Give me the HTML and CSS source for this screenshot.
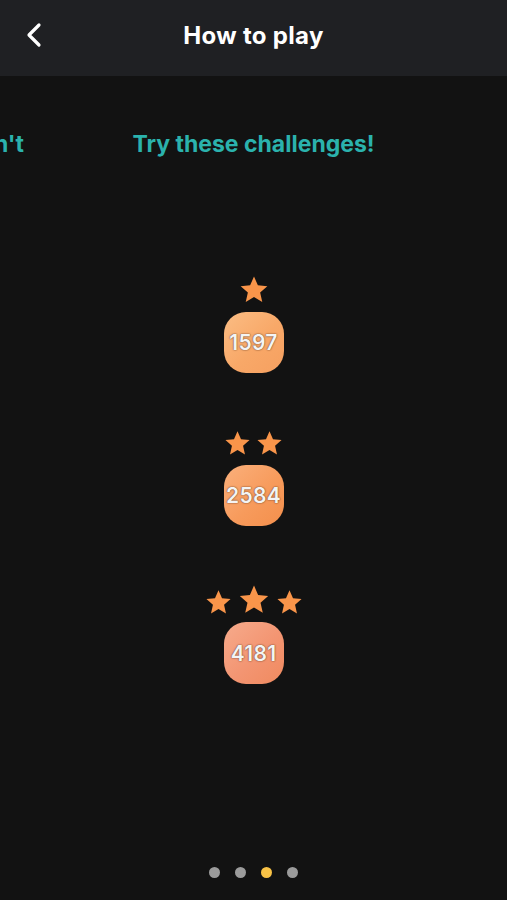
FILE: index.html
```html
<!DOCTYPE html>
<html lang="en">
<head>
  <meta charset="UTF-8">
  <meta name="viewport" content="width=device-width, initial-scale=1.0">
  <title>How to play</title>
  <link rel="stylesheet" href="styles.css">
</head>
<body>
  <header class="top-bar">
    <button class="back-btn" aria-label="Back">
      <svg width="20" height="26" viewBox="0 0 20 26"><path d="M15 3 L5 13 L15 23" fill="none" stroke="#fff" stroke-width="3.2" stroke-linecap="round" stroke-linejoin="round"/></svg>
    </button>
    <h1>How to play</h1>
  </header>

  <main class="pager">
    <div class="track">
      <section class="slide slide-prev">
        <p class="slide-title">Different tiles can't</p>
      </section>

      <section class="slide">
        <p class="slide-title">Try these challenges!</p>

        <div class="challenge">
          <div class="stars">
            <svg class="star" width="32" height="32" viewBox="0 0 24 24"><polygon points="12,1.8 14.9,8.4 22,9.1 16.6,13.9 18.2,21 12,17.3 5.8,21 7.4,13.9 2,9.1 9.1,8.4"/></svg>
          </div>
          <div class="tile tile-a">1597</div>
        </div>

        <div class="challenge">
          <div class="stars">
            <svg class="star" width="29" height="29" viewBox="0 0 24 24"><polygon points="12,1.8 14.9,8.4 22,9.1 16.6,13.9 18.2,21 12,17.3 5.8,21 7.4,13.9 2,9.1 9.1,8.4"/></svg>
            <svg class="star" width="29" height="29" viewBox="0 0 24 24"><polygon points="12,1.8 14.9,8.4 22,9.1 16.6,13.9 18.2,21 12,17.3 5.8,21 7.4,13.9 2,9.1 9.1,8.4"/></svg>
          </div>
          <div class="tile tile-b">2584</div>
        </div>

        <div class="challenge third">
          <div class="stars three">
            <svg class="star" width="29" height="29" viewBox="0 0 24 24"><polygon points="12,1.8 14.9,8.4 22,9.1 16.6,13.9 18.2,21 12,17.3 5.8,21 7.4,13.9 2,9.1 9.1,8.4"/></svg>
            <svg class="star" width="34" height="34" viewBox="0 0 24 24"><polygon points="12,1.8 14.9,8.4 22,9.1 16.6,13.9 18.2,21 12,17.3 5.8,21 7.4,13.9 2,9.1 9.1,8.4"/></svg>
            <svg class="star" width="29" height="29" viewBox="0 0 24 24"><polygon points="12,1.8 14.9,8.4 22,9.1 16.6,13.9 18.2,21 12,17.3 5.8,21 7.4,13.9 2,9.1 9.1,8.4"/></svg>
          </div>
          <div class="tile tile-c">4181</div>
        </div>
      </section>
    </div>

    <div class="dots">
      <span class="dot"></span>
      <span class="dot"></span>
      <span class="dot active"></span>
      <span class="dot"></span>
    </div>
  </main>
</body>
</html>
```

FILE: styles.css
```css
* {
  box-sizing: border-box;
}

body {
  margin: 0;
  height: 900px;
  background-color: #121212;
  font-family: Inter, "Liberation Sans", sans-serif;
  color: #fff;
  display: flex;
  flex-direction: column;
  overflow: hidden;
}

.top-bar {
  height: 76px;
  background-color: #1f2023;
  display: flex;
  align-items: center;
  justify-content: center;
  position: relative;
  flex-shrink: 0;
}

.top-bar h1 {
  margin: 0 0 6px;
  font-size: 24px;
  font-weight: 700;
  letter-spacing: 0.3px;
}

.back-btn {
  position: absolute;
  left: 24px;
  top: 22px;
  background: none;
  border: none;
  padding: 0;
  cursor: pointer;
}

.pager {
  flex: 1;
  display: flex;
  flex-direction: column;
  overflow: hidden;
}

.track {
  flex: 1;
  display: flex;
  margin-left: -507px;
}

.slide {
  width: 507px;
  flex-shrink: 0;
  display: flex;
  flex-direction: column;
  align-items: center;
  padding-top: 54px;
}

.slide-prev {
  align-items: flex-end;
}

.slide-prev .slide-title {
  margin-right: -24px;
}

.slide-title {
  margin: 0;
  font-size: 23px;
  font-weight: 700;
  color: #2bb2ad;
  line-height: 28px;
  white-space: nowrap;
}

.challenge {
  display: flex;
  flex-direction: column;
  align-items: center;
  margin-top: 53px;
}

.challenge:first-of-type {
  margin-top: 115px;
}

.challenge.third {
  margin-top: 57px;
}

.stars {
  display: flex;
  align-items: center;
  gap: 3px;
  height: 34px;
}

.stars.three {
  gap: 4px;
  align-items: flex-end;
}

.star {
  fill: #f9954a;
}

.tile {
  width: 60px;
  height: 61px;
  margin-top: 5px;
  border-radius: 22px;
  display: flex;
  align-items: center;
  justify-content: center;
  font-size: 21px;
  font-weight: 600;
  letter-spacing: 0.3px;
  color: #f4f4f4;
  text-shadow: 0 0 1px rgba(90, 50, 30, 0.9), 0 0 2px rgba(90, 50, 30, 0.6);
}

.tile-a {
  background: linear-gradient(135deg, #fbbd84 0%, #f8a868 55%, #f6a060 100%);
}

.tile-b {
  background: linear-gradient(135deg, #fab07c 0%, #f79b5c 55%, #f48f4c 100%);
}

.tile-c {
  height: 62px;
  background: linear-gradient(135deg, #f6ab8c 0%, #f39572 55%, #f08a5f 100%);
}

.dots {
  display: flex;
  justify-content: center;
  gap: 15px;
  padding-bottom: 22px;
}

.dot {
  width: 11px;
  height: 11px;
  border-radius: 50%;
  background-color: #9b9b9b;
}

.dot.active {
  background-color: #f8c246;
}
```
